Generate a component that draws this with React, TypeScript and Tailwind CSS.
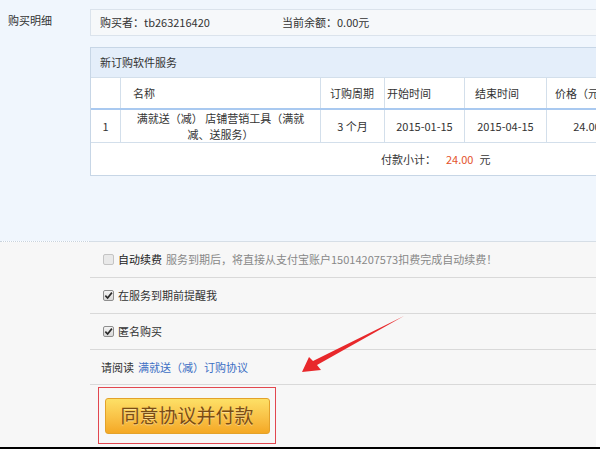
import React from "react";

const font = { fontFamily: '"Noto Sans CJK SC", "Noto Sans", sans-serif' };

function Checkbox({ checked, disabled }: { checked?: boolean; disabled?: boolean }) {
  return (
    <span
      className={`relative inline-flex h-[11px] w-[11px] shrink-0 items-center justify-center rounded-[2px] border ${
        disabled ? "border-[#c4c4c4] bg-[#e9e9e9]" : "border-[#8e8e8e] bg-gradient-to-b from-[#f4f4f4] to-[#d8d8d8]"
      }`}
    >
      {checked && (
        <svg viewBox="0 0 10 10" className="h-[9px] w-[9px]">
          <path d="M1.5 5.2 L4 7.8 L8.8 1.8" fill="none" stroke="#2b2b2b" strokeWidth="1.8" />
        </svg>
      )}
    </span>
  );
}

export default function App() {
  return (
    <div className="relative h-[449px] w-[600px] overflow-hidden bg-white text-[11px] text-[#333]" style={font}>
      <div className="w-[596px] overflow-hidden">
        {/* top section */}
        <div className="flex h-[241px] bg-[#f0f6fd] pt-[9px]">
          <div className="w-[90px] shrink-0 pl-[8px] pt-[3px] leading-[16px]">购买明细</div>
          <div className="flex flex-col">
            {/* buyer info */}
            <div className="flex h-[27px] w-[540px] items-center border border-[#dbe3ec] bg-[#f6f8fa] pl-[9px]">
              <span className="w-[182px]">购买者：tb263216420</span>
              <span>当前余额：0.00元</span>
            </div>

            {/* order table */}
            <div className="mt-[11px] w-[540px] border border-[#c7d6e6] bg-white">
              <div className="flex h-[30px] items-center border-b border-[#d3dfeb] bg-[#e4eefa] pl-[9px]">新订购软件服务</div>
              <div className="grid h-[32px] grid-cols-[30px_200px_64px_80px_82px_80px] border-b-2 border-[#a9c9f0]">
                <div className="border-r border-[#d3dfeb]" />
                <div className="flex items-center border-r border-[#d3dfeb] pl-[12px]">名称</div>
                <div className="flex items-center border-r border-[#d3dfeb] pl-[9px]">订购周期</div>
                <div className="flex items-center border-r border-[#d3dfeb] pl-[2px]">开始时间</div>
                <div className="flex items-center border-r border-[#d3dfeb] pl-[10px]">结束时间</div>
                <div className="flex items-center pl-[8px]">价格（元）</div>
              </div>
              <div className="grid h-[33px] grid-cols-[30px_200px_64px_80px_82px_80px] border-b border-[#d3dfeb]">
                <div className="flex items-center justify-center border-r border-[#d3dfeb]">1</div>
                <div className="flex items-center justify-center border-r border-[#d3dfeb] text-center leading-[16px]">
                  满就送（减） 店铺营销工具（满就
                  <br />
                  减、送服务）
                </div>
                <div className="flex items-center justify-center border-r border-[#d3dfeb]">3 个月</div>
                <div className="flex items-center justify-center border-r border-[#d3dfeb]">2015-01-15</div>
                <div className="flex items-center justify-center border-r border-[#d3dfeb]">2015-04-15</div>
                <div className="flex items-center justify-center">24.00</div>
              </div>
              <div className="flex h-[32px] items-center pl-[290px]">
                付款小计：
                <span className="ml-[10px] text-[#e4532c]">24.00</span>
                <span className="ml-[6px]">元</span>
              </div>
            </div>
          </div>
        </div>

        {/* divider */}
        <div className="flex">
          <div className="w-[90px] border-t border-dotted border-[#c9d3dd]" />
          <div className="flex-1 border-t border-[#d6dee6]" />
        </div>

        {/* options */}
        <div className="h-[205px] bg-[#f7f7f7] pl-[90px]">
          <div className="flex h-[36px] items-center gap-[4px] border-b border-[#d9d9d9] pl-[13px]">
            <Checkbox disabled />
            <span className="text-[#222]">自动续费</span>
            <span className="text-[#888]">服务到期后，将直接从支付宝账户15014207573扣费完成自动续费！</span>
          </div>
          <div className="flex h-[36px] items-center gap-[4px] border-b border-[#d9d9d9] pl-[13px]">
            <Checkbox checked />
            <span>在服务到期前提醒我</span>
          </div>
          <div className="flex h-[36px] items-center gap-[4px] border-b border-[#d9d9d9] pl-[13px]">
            <Checkbox checked />
            <span>匿名购买</span>
          </div>
          <div className="flex h-[35px] items-center border-b border-[#d9d9d9] pl-[11px]">
            <span>请阅读</span>
            <span className="ml-[4px] text-[#3d6fc4]">满就送（减）订购协议</span>
          </div>
          <div className="pl-[8px] pt-[2px]">
            <div className="flex h-[57px] w-[178px] items-center justify-center border border-[#e2474f]">
              <div
                className="flex h-[36px] w-[165px] items-center justify-center rounded-[3px] border border-[#e3a22a] bg-gradient-to-b from-[#fde066] to-[#f4a823] text-[19px] text-[#7a4c14]"
                style={{ textShadow: "0 1px 0 rgba(255,255,255,0.4)" }}
              >
                同意协议并付款
              </div>
            </div>
          </div>
        </div>
      </div>
      <div className="h-[3px] bg-black" />

      {/* red annotation arrow */}
      <svg className="absolute left-0 top-0" width="600" height="449" viewBox="0 0 600 449">
        <path d="M302 372 L309 357 L313 361 L404 316 L317 365 L321 370 Z" fill="#e8282b" />
      </svg>
    </div>
  );
}
